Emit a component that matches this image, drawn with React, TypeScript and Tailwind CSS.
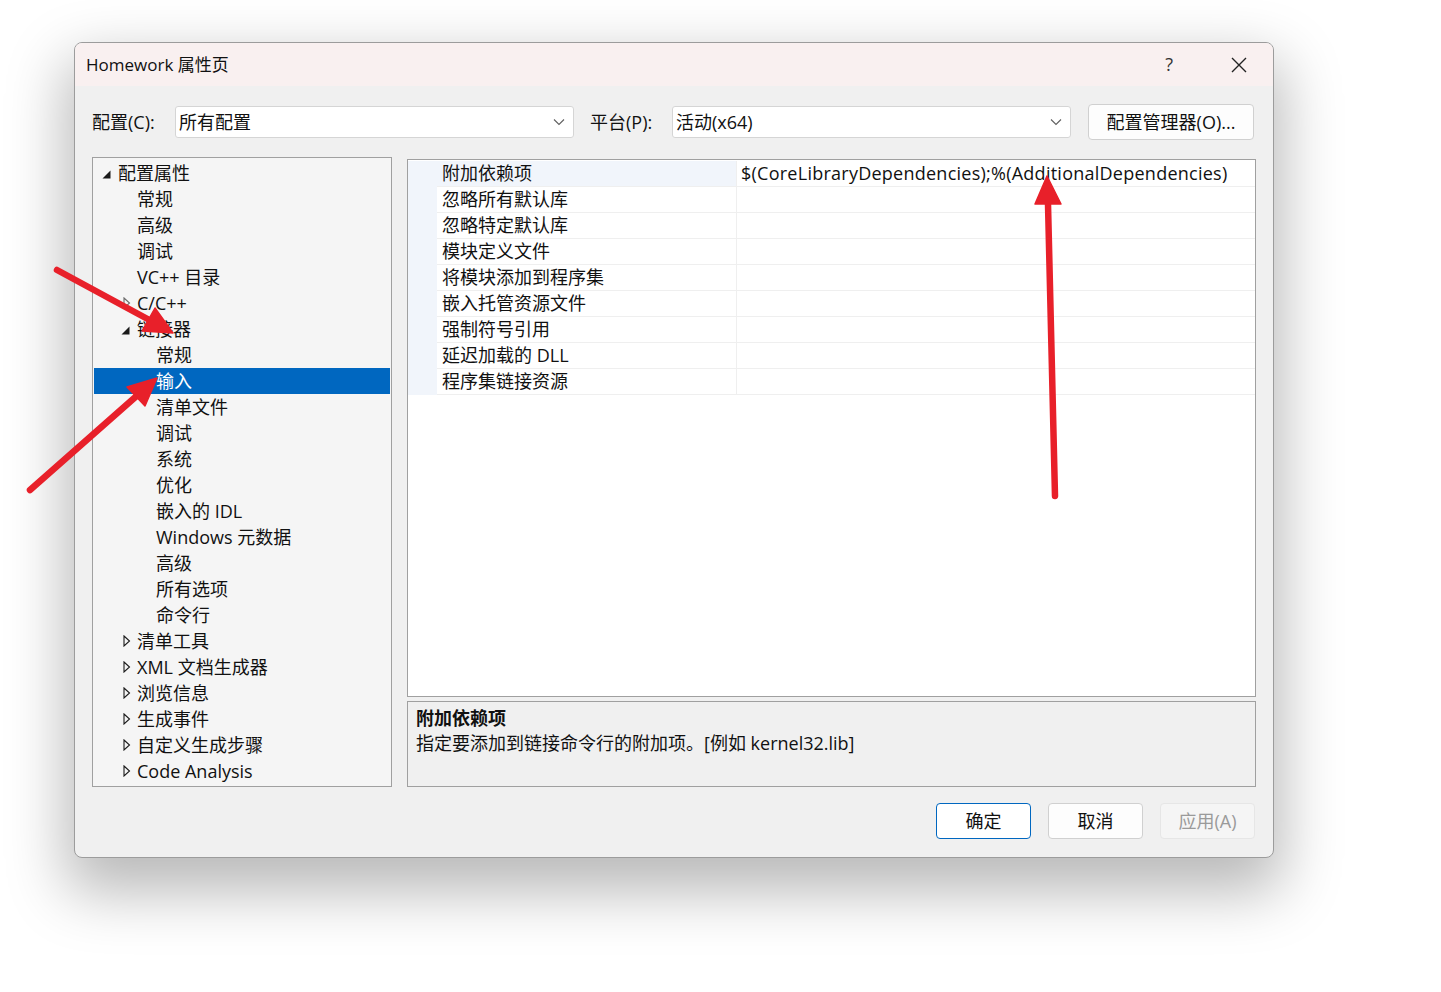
import React from "react";

type TreeItem = {
  label: string;
  level: number;
  arrow?: "open" | "closed" | "hover";
  selected?: boolean;
};

const tree: TreeItem[] = [
  { label: "配置属性", level: 0, arrow: "open" },
  { label: "常规", level: 1 },
  { label: "高级", level: 1 },
  { label: "调试", level: 1 },
  { label: "VC++ 目录", level: 1 },
  { label: "C/C++", level: 1, arrow: "hover" },
  { label: "链接器", level: 1, arrow: "open" },
  { label: "常规", level: 2 },
  { label: "输入", level: 2, selected: true },
  { label: "清单文件", level: 2 },
  { label: "调试", level: 2 },
  { label: "系统", level: 2 },
  { label: "优化", level: 2 },
  { label: "嵌入的 IDL", level: 2 },
  { label: "Windows 元数据", level: 2 },
  { label: "高级", level: 2 },
  { label: "所有选项", level: 2 },
  { label: "命令行", level: 2 },
  { label: "清单工具", level: 1, arrow: "closed" },
  { label: "XML 文档生成器", level: 1, arrow: "closed" },
  { label: "浏览信息", level: 1, arrow: "closed" },
  { label: "生成事件", level: 1, arrow: "closed" },
  { label: "自定义生成步骤", level: 1, arrow: "closed" },
  { label: "Code Analysis", level: 1, arrow: "closed" },
];

const props = [
  "附加依赖项",
  "忽略所有默认库",
  "忽略特定默认库",
  "模块定义文件",
  "将模块添加到程序集",
  "嵌入托管资源文件",
  "强制符号引用",
  "延迟加载的 DLL",
  "程序集链接资源",
];

const padByLevel = ["pl-[5px]", "pl-[24px]", "pl-[43px]"];

function Expander({ kind }: { kind?: TreeItem["arrow"] }) {
  if (kind === "open") {
    return (
      <svg width="9" height="9" viewBox="0 0 9 9" className="ml-[3px] mt-[2px]">
        <polygon points="8.5,0.5 8.5,8.5 0.5,8.5" fill="#1a1a1a" />
      </svg>
    );
  }
  if (kind === "closed" || kind === "hover") {
    return (
      <svg width="8" height="12" viewBox="0 0 8 12" className="ml-[5px]">
        <polygon
          points="1,1 6.5,6 1,11"
          fill="none"
          stroke={kind === "hover" ? "#6a6a6a" : "#1a1a1a"}
          strokeWidth="1.1"
        />
      </svg>
    );
  }
  return null;
}

function Chevron() {
  return (
    <svg width="12" height="8" viewBox="0 0 12 8">
      <polyline points="1,1.5 6,6.5 11,1.5" fill="none" stroke="#5f5f5f" strokeWidth="1.1" />
    </svg>
  );
}

function Select({ value }: { value: string }) {
  return (
    <div className="flex h-[32px] w-[399px] items-center justify-between rounded-[3px] border border-[#d5d5d5] bg-white pl-[3px] pr-[8px]">
      <span>{value}</span>
      <Chevron />
    </div>
  );
}

function Arrow({ x1, y1, tip, base }: { x1: number; y1: number; tip: [number, number]; base: [number, number][] }) {
  const cx = (base[0][0] + base[1][0]) / 2;
  const cy = (base[0][1] + base[1][1]) / 2;
  return (
    <g fill="#e8202a" stroke="#e8202a">
      <line x1={x1} y1={y1} x2={cx} y2={cy} strokeWidth="6.5" strokeLinecap="round" />
      <polygon
        points={`${tip[0]},${tip[1]} ${base[0][0]},${base[0][1]} ${base[1][0]},${base[1][1]}`}
        strokeWidth="1.5"
        strokeLinejoin="round"
      />
    </g>
  );
}

export default function App() {
  return (
    <div className="relative h-[992px] w-[1441px] overflow-hidden bg-white pl-[74px] pt-[42px] font-['Open_Sans','Noto_Sans_CJK_SC',sans-serif] text-[18px] text-[#111]">
      <div className="flex h-[816px] w-[1200px] flex-col overflow-hidden rounded-[8px] border border-[#9c9c9c] bg-[#f0f0f0] shadow-[0_26px_60px_8px_rgba(0,0,0,0.28)]">
        {/* Title bar */}
        <div className="flex h-[43px] shrink-0 items-center bg-[#f9f0f0] pl-[11px] pr-[26px] text-[17px]">
          <span className="flex-1">Homework 属性页</span>
          <span className="mr-[58px] text-[18px] text-[#333]">?</span>
          <svg width="16" height="16" viewBox="0 0 16 16">
            <path d="M1 1 L15 15 M15 1 L1 15" stroke="#222" strokeWidth="1.4" />
          </svg>
        </div>

        {/* Body */}
        <div className="flex flex-1 flex-col px-[17px] pt-[18px]">
          <div className="flex h-[36px] items-center">
            <span className="w-[83px]">配置(C):</span>
            <Select value="所有配置" />
            <span className="ml-[16px] w-[82px]">平台(P):</span>
            <Select value="活动(x64)" />
            <div className="ml-[17px] flex h-[36px] w-[166px] items-center justify-center rounded-[4px] border border-[#d0d0d0] bg-[#fdfdfd]">
              配置管理器(O)...
            </div>
          </div>

          <div className="mt-[17px] flex h-[630px] gap-[15px]">
            {/* Tree */}
            <div className="w-[300px] border border-[#a0a0a0] bg-[#f5f5f5] px-[1px] py-[2px]">
              {tree.map((t, i) => (
                <div
                  key={i}
                  className={`flex h-[26px] items-center ${padByLevel[t.level]} ${
                    t.selected ? "bg-[#0067c0] text-white" : ""
                  }`}
                >
                  <div className="flex w-[19px] items-center">
                    <Expander kind={t.arrow} />
                  </div>
                  <span className="whitespace-nowrap">{t.label}</span>
                </div>
              ))}
            </div>

            {/* Right side */}
            <div className="flex flex-1 flex-col">
              <div className="mt-[2px] h-[538px] border border-[#a0a0a0] bg-white pt-[1px]">
                {props.map((p, i) => (
                  <div key={i} className="flex h-[26px]">
                    <div className="w-[29px] bg-[#f1f5fb]" />
                    <div
                      className={`flex w-[300px] items-center border-r border-b border-[#efefef] pl-[5px] ${
                        i === 0 ? "bg-[#f1f5fb]" : ""
                      }`}
                    >
                      {p}
                    </div>
                    <div className="flex flex-1 items-center border-b border-[#efefef] pl-[4px] tracking-[0.25px] whitespace-nowrap">
                      {i === 0 ? "$(CoreLibraryDependencies);%(AdditionalDependencies)" : ""}
                    </div>
                  </div>
                ))}
              </div>
              <div className="mt-[4px] flex-1 border border-[#a0a0a0] bg-[#f0f0f0] px-[8px] pt-[4px] leading-[25px]">
                <div className="font-bold">附加依赖项</div>
                <div>指定要添加到链接命令行的附加项。[例如 kernel32.lib]</div>
              </div>
            </div>
          </div>

          {/* Buttons */}
          <div className="mt-[16px] flex h-[36px] justify-end gap-[17px] pr-[1px]">
            <div className="flex w-[95px] items-center justify-center rounded-[4px] border border-[#0067c0] bg-white">
              确定
            </div>
            <div className="flex w-[95px] items-center justify-center rounded-[4px] border border-[#d0d0d0] bg-[#fdfdfd]">
              取消
            </div>
            <div className="flex w-[95px] items-center justify-center rounded-[4px] border border-[#e6e6e6] bg-[#f5f5f5] text-[#9a9a9a]">
              应用(A)
            </div>
          </div>
        </div>
      </div>

      {/* Red annotation arrows */}
      <svg className="pointer-events-none absolute inset-0" width="1441" height="992" viewBox="0 0 1441 992">
        <Arrow x1={57} y1={270} tip={[173, 333]} base={[[142, 331], [155, 308]]} />
        <Arrow x1={30} y1={490} tip={[157, 378]} base={[[145, 406], [127, 387]]} />
        <Arrow x1={1055} y1={496} tip={[1047, 176]} base={[[1035, 204], [1061, 204]]} />
      </svg>
    </div>
  );
}
